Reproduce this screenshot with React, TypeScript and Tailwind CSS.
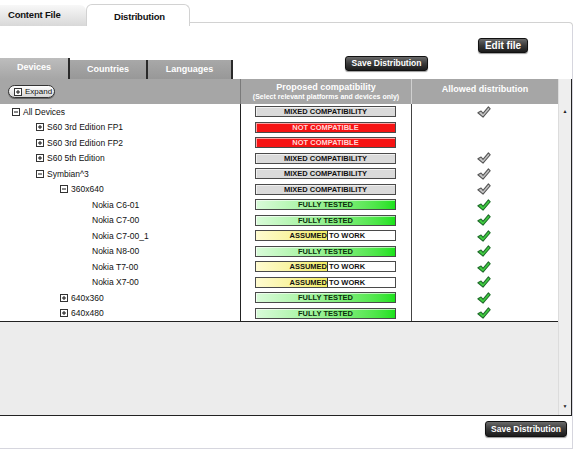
import type { ReactNode } from "react";

type Status = "mixed" | "not" | "full" | "assumed";

interface Row {
  label: string;
  level: number;
  icon?: "plus" | "minus";
  status: Status;
  check?: "gray" | "green";
}

const rows: Row[] = [
  { label: "All Devices", level: 0, icon: "minus", status: "mixed", check: "gray" },
  { label: "S60 3rd Edition FP1", level: 1, icon: "plus", status: "not" },
  { label: "S60 3rd Edition FP2", level: 1, icon: "plus", status: "not" },
  { label: "S60 5th Edition", level: 1, icon: "plus", status: "mixed", check: "gray" },
  { label: "Symbian^3", level: 1, icon: "minus", status: "mixed", check: "gray" },
  { label: "360x640", level: 2, icon: "minus", status: "mixed", check: "gray" },
  { label: "Nokia C6-01", level: 3, status: "full", check: "green" },
  { label: "Nokia C7-00", level: 3, status: "full", check: "green" },
  { label: "Nokia C7-00_1", level: 3, status: "assumed", check: "green" },
  { label: "Nokia N8-00", level: 3, status: "full", check: "green" },
  { label: "Nokia T7-00", level: 3, status: "assumed", check: "green" },
  { label: "Nokia X7-00", level: 3, status: "assumed", check: "green" },
  { label: "640x360", level: 2, icon: "plus", status: "full", check: "green" },
  { label: "640x480", level: 2, icon: "plus", status: "full", check: "green" },
];

const indent = ["pl-[12px]", "pl-[36px]", "pl-[60px]", "pl-[92px]"];

export default function App() {
  return (
    <div className="h-[449px] w-[576px] overflow-hidden bg-white font-['Liberation_Sans',Arial,sans-serif] text-[#111]">
      {/* top tabs */}
      <div className="flex h-[26px] w-[573px] items-end">
        <div className="h-[21px] w-[86px] rounded-tr-[6px] bg-gradient-to-b from-[#f8f8f8] to-[#d8d8d8] pl-[8px] pt-[5px] text-[9.5px] font-bold leading-none tracking-[-0.2px]">
          Content File
        </div>
        <div className="h-[22px] w-[104px] rounded-t-[6px] border border-b-0 border-[#d2d2d2] bg-white pl-[27px] pt-[7px] text-[9.5px] font-bold leading-none tracking-[-0.2px]">
          Distribution
        </div>
        <div className="h-[4px] flex-1 rounded-tr-[5px] border-r border-t border-[#d2d2d2]" />
      </div>

      {/* panel */}
      <div className="flex h-[423px] w-[573px] flex-col border-b border-r border-[#d6d6de]">
        <div className="flex h-[30px] items-start justify-end pr-[44px] pt-[12px]">
          <DarkButton className="h-[15px] w-[50px] text-[10px]">Edit file</DarkButton>
        </div>

        <div className="flex h-[23px] items-start">
          <div className="flex h-full items-end">
            <Tab active className="w-[70px]">Devices</Tab>
            <Tab className="w-[78px]">Countries</Tab>
            <Tab className="w-[85px]">Languages</Tab>
          </div>
          <DarkButton className="ml-[112px] h-[15px] w-[83px] text-[8.5px]">Save Distribution</DarkButton>
        </div>

        {/* table */}
        <div className="flex h-[337px] w-[572px] border-b border-r border-[#222]">
          <div className="flex w-[558px] flex-col">
            <div className="grid h-[25px] grid-cols-[241px_171px_146px] bg-[#a6a6a6] text-white">
              <div className="flex items-center border-r border-[#7a7a7a] pl-[8px]">
                <div className="flex h-[13px] w-[47px] items-center gap-[3px] rounded-full border border-[#333] bg-gradient-to-b from-white to-[#d6d6d6] pl-[5px] text-[8px] leading-none text-[#111] shadow-[0_1px_0_#666]">
                  <TreeIcon kind="plus" />
                  Expand
                </div>
              </div>
              <div className="flex flex-col items-center justify-center border-r border-[#d0d0d0] leading-none">
                <span className="text-[9px] font-bold">Proposed compatibility</span>
                <span className="mt-[1px] text-[7px] font-bold">(Select relevant platforms and devices only)</span>
              </div>
              <div className="flex items-center justify-center pb-[4px] text-[9px] font-bold">
                Allowed distribution
              </div>
            </div>

            <div className="flex flex-col border-b border-[#222]">
              {rows.map((r) => (
                <div key={r.label} className="grid h-[15.5px] grid-cols-[241px_171px_146px]">
                  <div className={`flex items-center gap-[3px] border-r border-[#222] text-[8.5px] leading-none ${indent[r.level]}`}>
                    {r.icon && <TreeIcon kind={r.icon} />}
                    <span>{r.label}</span>
                  </div>
                  <div className="flex items-center border-r border-[#444] pl-[14px]">
                    <Badge status={r.status} />
                  </div>
                  <div className="flex items-center justify-center pr-[2px]">
                    {r.check && <Check color={r.check} />}
                  </div>
                </div>
              ))}
            </div>
            <div className="flex-1 bg-[#ececec]" />
          </div>

          <div className="flex w-[13px] flex-col items-center border-l border-[#dcdcdc] bg-[#eeeeee]">
            <span className="mt-[30px] text-[5px] leading-none text-[#222]">▲</span>
            <span className="mt-auto mb-[6px] text-[5px] leading-none text-[#222]">▼</span>
          </div>
        </div>

        <div className="flex justify-end pr-[5px] pt-[5px]">
          <DarkButton className="h-[16px] w-[82px] text-[8.5px]">Save Distribution</DarkButton>
        </div>
      </div>
    </div>
  );
}

function DarkButton({ className, children }: { className: string; children: ReactNode }) {
  return (
    <div
      className={`flex items-center justify-center rounded-[3px] border border-[#111] bg-gradient-to-b from-[#6a6a6a] via-[#3a3a3a] to-[#1c1c1c] font-bold leading-none text-white shadow-[0_1px_1px_rgba(0,0,0,0.4)] ${className}`}
    >
      {children}
    </div>
  );
}

function Tab({ active, className, children }: { active?: boolean; className: string; children: ReactNode }) {
  return (
    <div
      className={[
        "flex items-center justify-center border-r-2 border-[#2a2a2a] text-[9px] font-bold leading-none text-white",
        active
          ? "h-[21px] bg-gradient-to-b from-[#bdbdbd] to-[#a6a6a6] pb-[2px]"
          : "h-[19px] bg-gradient-to-b from-[#a8a8a8] to-[#989898]",
        className,
      ].join(" ")}
    >
      {children}
    </div>
  );
}

function TreeIcon({ kind }: { kind: "plus" | "minus" }) {
  return (
    <svg width="8" height="8" viewBox="0 0 8 8" className="shrink-0">
      <rect x="0.5" y="0.5" width="7" height="7" fill="#fff" stroke="#333" />
      <line x1="2" y1="4" x2="6" y2="4" stroke="#111" />
      {kind === "plus" && <line x1="4" y1="2" x2="4" y2="6" stroke="#111" />}
    </svg>
  );
}

function Badge({ status }: { status: Status }) {
  const base =
    "flex h-[11px] w-[141px] items-center border border-[#4a4a4a] text-[7.5px] font-bold leading-none shadow-[inset_1px_1px_0_rgba(255,255,255,0.6)]";
  if (status === "mixed")
    return <div className={`${base} justify-center bg-[#dadada] text-[#111]`}>MIXED COMPATIBILITY</div>;
  if (status === "not")
    return <div className={`${base} justify-center bg-[#f61313] text-[#ffd6d6]`}>NOT COMPATIBLE</div>;
  if (status === "full")
    return (
      <div className={`${base} justify-center bg-gradient-to-r from-[#d9fbd9] to-[#18e218] text-[#0b2e0b]`}>
        FULLY TESTED
      </div>
    );
  return (
    <div className={`${base} bg-white text-[#111]`}>
      <div className="flex h-full w-[72px] items-center justify-end border-r border-[#333] bg-gradient-to-r from-[#fffbd0] to-[#f3ec63]">
        ASSUMED
      </div>
      <span className="pl-[1px]">TO WORK</span>
    </div>
  );
}

function Check({ color }: { color: "gray" | "green" }) {
  const fill = color === "green" ? "#3fcf3f" : "#c4c4c4";
  const stroke = color === "green" ? "#1f6b2a" : "#555";
  return (
    <svg width="14" height="12" viewBox="0 0 13 11">
      <path d="M0.8 6.2 L3.8 4.6 L5.6 6.8 L10.6 0.8 L12.3 2.5 L5.6 10.2 Z" fill={fill} stroke={stroke} strokeWidth="1" strokeLinejoin="round" />
    </svg>
  );
}
